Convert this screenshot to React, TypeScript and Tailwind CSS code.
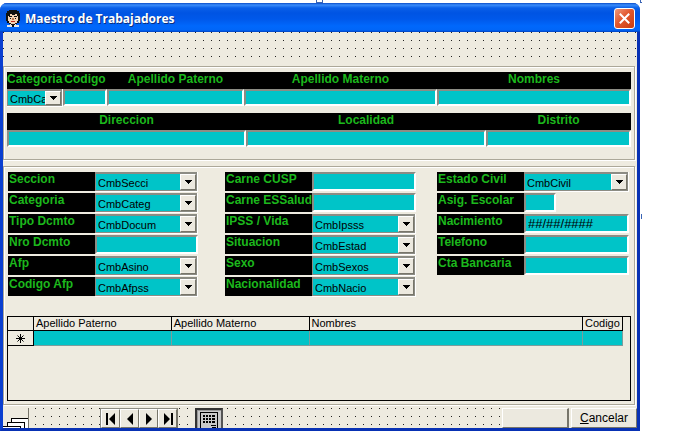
import type { ReactNode } from "react";

const dots =
  "bg-[linear-gradient(90deg,#eeebe0_7px,transparent_7px),linear-gradient(#eeebe0_7px,#222_7px)] bg-[length:8px_8px]";
const frame =
  "mr-[2px] border border-[#aca899] shadow-[inset_1px_1px_#fff,1px_1px_#fff]";
const sunken =
  "block w-full min-w-0 rounded-none border-t-2 border-l-2 border-r-2 border-b-2 border-t-[#8c8c84] border-l-[#8c8c84] border-r-white border-b-white bg-[#00c4c8] outline-none text-black";
const raised =
  "border border-t-white border-l-white border-r-[#77756a] border-b-[#77756a] bg-[#ece9df]";

function TextBox({ id, value = "", className }: { id: string; value?: string; className: string }) {
  return <input id={id} type="text" defaultValue={value} className={`${sunken} pl-[2px] ${className}`} />;
}

function Combo({ id, value, className }: { id: string; value: string; className: string }) {
  return (
    <div className={`relative border-r border-b border-white ${className}`}>
      <select
        id={id}
        defaultValue={value}
        className="block h-full w-full appearance-none rounded-none border border-t-2 border-[#8c8c84] bg-[#00c4c8] pt-px pr-3 pl-[2px] text-[11px] leading-[14px] text-black outline-none"
      >
        <option>{value}</option>
      </select>
      <span
        className={`pointer-events-none absolute top-[2px] right-px bottom-px flex w-4 items-center justify-center ${raised}`}
      >
        <svg width="7" height="4" viewBox="0 0 7 4" shapeRendering="crispEdges">
          <path d="M0 0h7v1H0zM1 1h5v1H1zM2 2h3v1H2zM3 3h1v1H3z" />
        </svg>
      </span>
    </div>
  );
}

function Column({ id, label, left, children }: { id: string; label: string; left?: boolean; children: ReactNode }) {
  return (
    <div className="min-w-0">
      <label
        htmlFor={id}
        className={`block h-[17px] bg-black text-[12px] leading-[14px] font-bold whitespace-nowrap text-[#1cb81c] ${left ? "text-left" : "text-center"}`}
      >
        {label}
      </label>
      {children}
    </div>
  );
}

type Field = { id: string; label: string; value?: string; kind: "combo" | "text" | "short" };

const groups: { pad: string; fields: Field[] }[] = [
  {
    pad: "pr-[27px]",
    fields: [
      { id: "seccion", label: "Seccion", value: "CmbSecci", kind: "combo" },
      { id: "categ", label: "Categoria", value: "CmbCateg", kind: "combo" },
      { id: "tipo", label: "Tipo Dcmto", value: "CmbDocum", kind: "combo" },
      { id: "nro", label: "Nro Dcmto", kind: "text" },
      { id: "afp", label: "Afp", value: "CmbAsino", kind: "combo" },
      { id: "codafp", label: "Codigo Afp", value: "CmbAfpss", kind: "combo" },
    ],
  },
  {
    pad: "pr-[21px]",
    fields: [
      { id: "cusp", label: "Carne CUSP", kind: "text" },
      { id: "essalud", label: "Carne ESSalud", kind: "text" },
      { id: "ipss", label: "IPSS / Vida", value: "CmbIpsss", kind: "combo" },
      { id: "situacion", label: "Situacion", value: "CmbEstad", kind: "combo" },
      { id: "sexo", label: "Sexo", value: "CmbSexos", kind: "combo" },
      { id: "nacion", label: "Nacionalidad", value: "CmbNacio", kind: "combo" },
    ],
  },
  {
    pad: "",
    fields: [
      { id: "civil", label: "Estado Civil", value: "CmbCivil", kind: "combo" },
      { id: "escolar", label: "Asig. Escolar", kind: "short" },
      { id: "nacim", label: "Nacimiento", value: "##/##/####", kind: "text" },
      { id: "telefono", label: "Telefono", kind: "text" },
      { id: "cuenta", label: "Cta Bancaria", kind: "text" },
    ],
  },
];

function FieldRow({ field }: { field: Field }) {
  return (
    <div className="flex h-[21px] items-start">
      <label
        htmlFor={field.id}
        className="h-[19px] w-[87px] shrink-0 bg-black pl-px text-[12px] leading-[14px] font-bold whitespace-nowrap text-[#1cb81c]"
      >
        {field.label}
      </label>
      {field.kind === "combo" ? (
        <Combo id={field.id} value={field.value ?? ""} className="h-5 min-w-0 flex-1" />
      ) : field.kind === "short" ? (
        <TextBox id={field.id} className="h-[19px] max-w-8" />
      ) : (
        <TextBox id={field.id} value={field.value} className="h-[19px] text-[13px]" />
      )}
    </div>
  );
}

const navIcons = [
  { name: "Primero", d: "M0 0h2v12H0zM9 0v12L3 6z" },
  { name: "Anterior", d: "M8 0v12L2 6z" },
  { name: "Siguiente", d: "M2 0v12L8 6z" },
  { name: "Ultimo", d: "M1 0v12L7 6zM8 0h2v12H8z" },
];

function FaceIcon() {
  return (
    <svg width="14" height="17" viewBox="0 0 14 17" shapeRendering="crispEdges" aria-hidden="true">
      <path fill="#111" d="M3 0h8v1h2v2h1v8h-1v2h-2v1H3v-1H1v-2H0V3h1V1h2z" />
      <path fill="#f6d3b4" d="M4 4h2v1h3V4h2v2h1v5h-1v2H9v1H5v-1H3v-2H2V6h2z" />
      <path fill="#111" d="M3 6h3v1H3zM8 6h3v1H8zM4 8h1v1H4zM9 8h1v1H9z" />
      <path fill="#b87850" d="M6 8h2v2H6z" />
      <path fill="#c03020" d="M5 11h4v1H5z" />
      <path fill="#e8e8e8" d="M1 15h3v-1h6v1h3v2H1z" />
      <path fill="#111" d="M5 14h4v1H5zM6 15h2v2H6z" />
    </svg>
  );
}

export default function App() {
  return (
    <div className="relative bg-white pt-[3px] pr-[42px] font-['Liberation_Sans',Arial,sans-serif] text-[11px] text-black">
      <span className="absolute top-[-4px] left-[316px] size-[7px] border border-[#3a64b4]" />
      <span className="absolute top-0 right-[40px] h-[3px] w-[2px] border-b border-l border-[#3a64b4]" />
      <span className="absolute top-[214px] right-[40px] h-[5px] w-px bg-[#3a64b4]" />

      <main className="rounded-t-[7px] border-x-[3px] border-b-[3px] border-[#0a3fd0] border-r-[#0831b4] border-b-[#0831b4] bg-[#0a3fd0]">
        <header className="-mx-[3px] flex h-[29px] items-center rounded-t-[7px] bg-[linear-gradient(#0a4cc8_0px,#3b8dfa_2px,#0a5fe8_5px,#0054e3_10px,#0058ea_16px,#0068fc_23px,#0066f8_27px,#0040c0_29px)] pt-[2px] pr-[5px] pl-[6px]">
          <FaceIcon />
          <h1 className="ml-[5px] flex-1 pt-px font-['Open_Sans','Noto_Sans',sans-serif] text-[12px] leading-[18px] font-bold whitespace-nowrap text-white [text-shadow:1px_1px_#0a2f80]">
            Maestro de Trabajadores
          </h1>
          <button
            type="button"
            aria-label="Cerrar"
            className="flex size-[21px] items-center justify-center rounded-[3px] border border-white bg-[linear-gradient(135deg,#f09a7c,#e2582e_45%,#c83c10)]"
          >
            <svg width="11" height="11" viewBox="0 0 11 11" stroke="#fff" strokeWidth="2" strokeLinecap="square">
              <path d="M1.5 1.5l8 8M9.5 1.5l-8 8" />
            </svg>
          </button>
        </header>

        <div className="bg-[#eeebe0]">
          <div className={`h-[31px] bg-[position:1px_1px] ${dots}`} />

          <section className={`mt-[3px] px-[3px] pt-[5px] pb-3 ${frame}`}>
            <div className="grid grid-cols-[56px_44px_137fr_193fr_194fr]">
              <Column id="cat" label="Categoria" left>
                <Combo id="cat" value="CmbCa" className="h-[18px]" />
              </Column>
              <Column id="cod" label="Codigo">
                <TextBox id="cod" className="h-[17px]" />
              </Column>
              <Column id="paterno" label="Apellido Paterno">
                <TextBox id="paterno" className="h-[17px]" />
              </Column>
              <Column id="materno" label="Apellido Materno">
                <TextBox id="materno" className="h-[17px]" />
              </Column>
              <Column id="nombres" label="Nombres">
                <TextBox id="nombres" className="h-[17px]" />
              </Column>
            </div>
            <div className="mt-[6px] grid grid-cols-[239fr_240fr_145fr]">
              <Column id="direccion" label="Direccion">
                <TextBox id="direccion" className="h-[17px]" />
              </Column>
              <Column id="localidad" label="Localidad">
                <TextBox id="localidad" className="h-[17px]" />
              </Column>
              <Column id="distrito" label="Distrito">
                <TextBox id="distrito" className="h-[17px]" />
              </Column>
            </div>
          </section>

          <section className={`mt-[6px] px-[3px] pt-[5px] pb-[3px] ${frame}`}>
            <div className="grid grid-cols-[217fr_212fr_192fr] pr-[2px] pl-px">
              {groups.map((group) => (
                <div key={group.fields[0].id} className={`min-w-0 ${group.pad}`}>
                  {group.fields.map((field) => (
                    <FieldRow key={field.id} field={field} />
                  ))}
                </div>
              ))}
            </div>

            <div className="mt-[18px] h-[85px] border border-black pr-[7px]">
              <table className="w-full table-fixed border-separate border-spacing-0 leading-[13px]">
                <colgroup>
                  <col className="w-[26px]" />
                  <col className="w-[22.4%]" />
                  <col className="w-[22.4%]" />
                  <col />
                  <col className="w-10" />
                </colgroup>
                <thead>
                  <tr className="h-[14px] text-left">
                    <td className="border-r border-b border-black p-0" />
                    {["Apellido Paterno", "Apellido Materno", "Nombres", "Codigo"].map((name) => (
                      <th key={name} scope="col" className="border-r border-b border-black p-0 pl-[2px] font-normal">
                        {name}
                      </th>
                    ))}
                  </tr>
                </thead>
                <tbody>
                  <tr className="h-[15px]">
                    <th scope="row" className="border-r border-b border-black p-0" aria-label="Nuevo registro">
                      <svg className="mx-auto" width="9" height="9" viewBox="0 0 9 9" stroke="#000">
                        <path d="M4.5 0v9M0 4.5h9M1.5 1.5l6 6M7.5 1.5l-6 6" />
                      </svg>
                    </th>
                    <td className="border-r border-b border-[#7c9c9c] bg-[#00c4c8] p-0" />
                    <td className="border-r border-b border-[#7c9c9c] bg-[#00c4c8] p-0" />
                    <td className="border-r border-b border-[#7c9c9c] bg-[#00c4c8] p-0" />
                    <td className="border-r border-b border-[#7c9c9c] bg-[#00c4c8] p-0" />
                  </tr>
                </tbody>
              </table>
            </div>
          </section>

          <footer className={`mt-px flex h-[22px] items-stretch overflow-hidden bg-[position:1px_3px] pt-[2px] ${dots}`}>
            <button type="button" aria-label="Ventanas" className="w-[26px] border-r border-[#77756a] bg-[#eeebe0]">
              <svg width="25" height="20" viewBox="0 0 25 20" fill="#fff" stroke="#000" shapeRendering="crispEdges">
                <path d="M8.5 10.5h20v12h-20z" />
                <path d="M4.5 14.5h17v8h-17z" />
                <path d="M-1 18.5h18.5v4H-1z" />
              </svg>
            </button>
            <div className="ml-[71px] flex w-[78px] border border-t-[#8c8c84] border-l-[#8c8c84] border-r-[#77756a] border-b-0">
              {navIcons.map((icon) => (
                <button
                  key={icon.name}
                  type="button"
                  aria-label={icon.name}
                  className={`flex flex-1 items-center justify-center ${raised}`}
                >
                  <svg width="10" height="12" viewBox="0 0 10 12">
                    <path d={icon.d} />
                  </svg>
                </button>
              ))}
            </div>
            <button
              type="button"
              aria-label="Calculadora"
              className="ml-[17px] w-7 border-2 border-b-0 border-t-[#333] border-r-[#555] border-l-[#333] bg-[#c8c8c8]"
            >
              <svg width="24" height="18" viewBox="0 0 24 18" shapeRendering="crispEdges">
                <path fill="#999" d="M0 0h24v1H1v17H0z" />
                <path fill="none" stroke="#000" d="M3.5 20V2.5h17V20" />
                <path d="M6 5h2v2H6zM9 5h2v2H9zM12 5h2v2h-2zM15 5h3v2h-3zM6 8h2v2H6zM9 8h2v2H9zM12 8h2v2h-2zM15 8h3v2h-3zM6 11h2v2H6zM9 11h2v2H9zM12 11h2v2h-2zM15 11h3v2h-3zM14 15h5v1h-5zM15 17h4v1h-4z" />
              </svg>
            </button>
            <button type="button" aria-label="Aceptar" className={`ml-auto w-[67px] border-r-2 ${raised}`} />
            <button type="button" className={`ml-[2px] w-[66px] text-[12px] leading-[18px] ${raised}`}>
              <u>C</u>ancelar
            </button>
          </footer>
        </div>
      </main>
    </div>
  );
}
